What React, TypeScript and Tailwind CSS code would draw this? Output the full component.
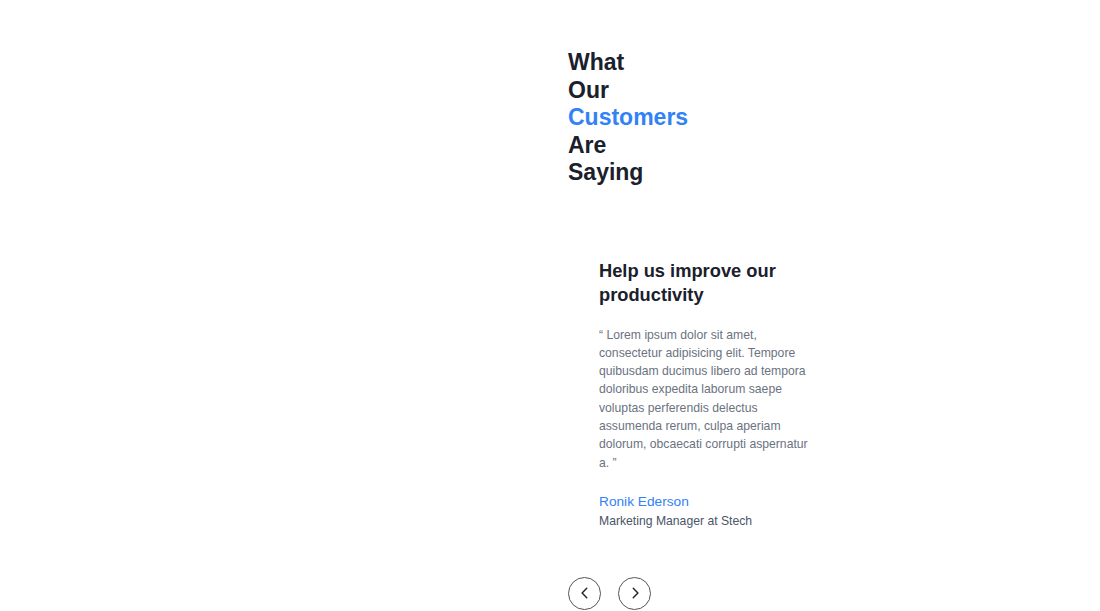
import React from "react";

export default function App() {
  return (
    <div className="min-h-screen w-full bg-white" style={{ fontFamily: '"Liberation Sans", Arial, sans-serif' }}>
      <div className="flex">
        <div className="w-[568px] shrink-0" />
        <div className="flex flex-col pt-[49px]">
          <h2 className="flex flex-col text-[23px] leading-[27.5px] font-bold text-[#1a202c]">
            <span>What</span>
            <span>Our</span>
            <span className="text-[#3182f6]">Customers</span>
            <span>Are</span>
            <span>Saying</span>
          </h2>
          <div className="mt-[72px] pl-[31px] w-[247px]">
            <h3 className="text-[18.3px] leading-[24.5px] font-bold text-[#1a202c]">
              Help us improve our productivity
            </h3>
            <p className="mt-[18px] text-[12.2px] leading-[18.3px] text-[#6b7280]">
              “ Lorem ipsum dolor sit amet, consectetur adipisicing elit. Tempore quibusdam ducimus libero ad tempora doloribus expedita laborum saepe voluptas perferendis delectus assumenda rerum, culpa aperiam dolorum, obcaecati corrupti aspernatur a. ”
            </p>
            <div className="mt-[20px] text-[13.7px] leading-[20.5px] text-[#3182f6]">Ronik Ederson</div>
            <div className="text-[12.2px] leading-[18.3px] text-[#4a5568]">Marketing Manager at Stech</div>
          </div>
          <div className="mt-[46px] flex gap-[17px]">
            <button className="flex h-[33px] w-[33px] items-center justify-center rounded-full border border-[#555]">
              <svg width="14" height="14" viewBox="0 0 24 24" fill="none" stroke="#1a202c" strokeWidth="2.4" strokeLinecap="round" strokeLinejoin="round">
                <path d="M15 4 7 12l8 8" />
              </svg>
            </button>
            <button className="flex h-[33px] w-[33px] items-center justify-center rounded-full border border-[#555]">
              <svg width="14" height="14" viewBox="0 0 24 24" fill="none" stroke="#1a202c" strokeWidth="2.4" strokeLinecap="round" strokeLinejoin="round">
                <path d="M9 4l8 8-8 8" />
              </svg>
            </button>
          </div>
        </div>
      </div>
    </div>
  );
}
